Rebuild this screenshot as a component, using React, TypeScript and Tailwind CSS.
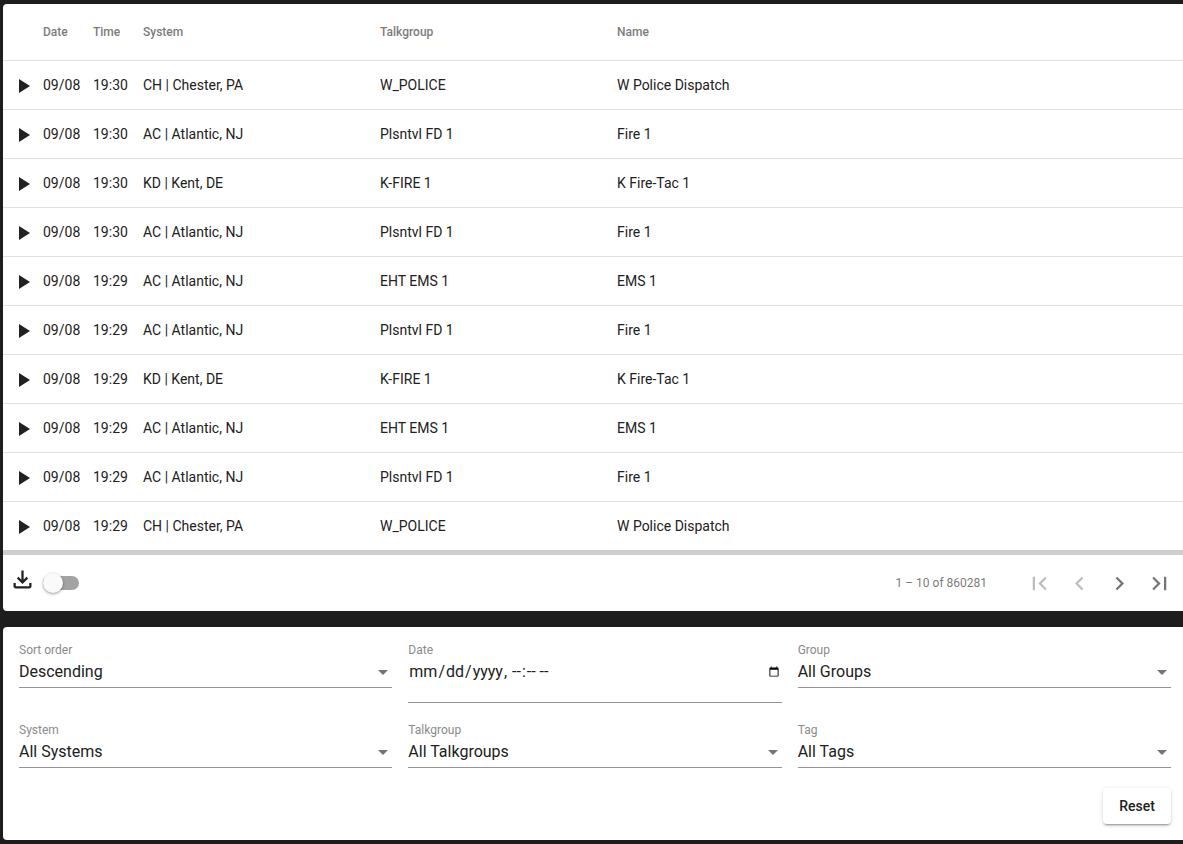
import React from "react";

const rows = [
  ["09/08", "19:30", "CH | Chester, PA", "W_POLICE", "W Police Dispatch"],
  ["09/08", "19:30", "AC | Atlantic, NJ", "Plsntvl FD 1", "Fire 1"],
  ["09/08", "19:30", "KD | Kent, DE", "K-FIRE 1", "K Fire-Tac 1"],
  ["09/08", "19:30", "AC | Atlantic, NJ", "Plsntvl FD 1", "Fire 1"],
  ["09/08", "19:29", "AC | Atlantic, NJ", "EHT EMS 1", "EMS 1"],
  ["09/08", "19:29", "AC | Atlantic, NJ", "Plsntvl FD 1", "Fire 1"],
  ["09/08", "19:29", "KD | Kent, DE", "K-FIRE 1", "K Fire-Tac 1"],
  ["09/08", "19:29", "AC | Atlantic, NJ", "EHT EMS 1", "EMS 1"],
  ["09/08", "19:29", "AC | Atlantic, NJ", "Plsntvl FD 1", "Fire 1"],
  ["09/08", "19:29", "CH | Chester, PA", "W_POLICE", "W Police Dispatch"],
];

const gridCols = "grid grid-cols-[40px_50px_50px_237px_237px_1fr] items-center";

function MatIcon({ d, className }: { d: string; className: string }) {
  return (
    <svg viewBox="0 0 24 24" className={className} fill="currentColor">
      <path d={d} />
    </svg>
  );
}

function PageButton({ d, disabled }: { d: string; disabled?: boolean }) {
  return (
    <button className={`w-10 h-10 flex items-center justify-center ${disabled ? "text-[#bdbdbd]" : "text-[#757575]"}`}>
      <MatIcon d={d} className="w-[27px] h-[27px]" />
    </button>
  );
}

function SelectField({ label, value }: { label: string; value: string }) {
  return (
    <div className="flex flex-col">
      <span className="text-xs leading-[14px] text-[#8a8a8a]">{label}</span>
      <div className="flex items-center justify-between h-[27px] pt-[1px] pr-[4px] border-b border-[#949494] box-content pb-[2px]">
        <span className="text-base leading-[20px] text-[#212121]">{value}</span>
        <span className="w-0 h-0 mt-[2px] border-x-[5px] border-x-transparent border-t-[5px] border-t-[#757575]" />
      </div>
    </div>
  );
}

export default function App() {
  return (
    <div className="h-[844px] overflow-hidden bg-[#1d1d1d] pt-[4px] pl-[3px] font-['Roboto',sans-serif]">
      <div className="bg-white rounded-l-[4px] h-[607px] flex flex-col">
        <div className={`${gridCols} h-[57px] border-b border-[#e0e0e0] text-xs font-medium text-[#7c7c7c]`}>
          <span />
          <span>Date</span>
          <span>Time</span>
          <span>System</span>
          <span>Talkgroup</span>
          <span>Name</span>
        </div>
        {rows.map((r, i) => (
          <div
            key={i}
            className={`${gridCols} text-sm text-[#212121] ${i < 9 ? "h-[49px] border-b border-[#e0e0e0]" : "h-[48px]"}`}
          >
            <span className="pl-[8px] flex mt-[2px]">
              <MatIcon d="M8 5v14l11-7z" className="w-6 h-6 text-[#212121]" />
            </span>
            {r.map((c, j) => (
              <span key={j}>{c}</span>
            ))}
          </div>
        ))}
        <div className="h-[5px] bg-[#cfcfcf]" />
        <div className="flex-1 flex items-center pl-[6px]">
          <MatIcon
            d="M18 15v3H6v-3H4v3c0 1.1.9 2 2 2h12c1.1 0 2-.9 2-2v-3h-2zm-1-4l-1.41-1.41L13 12.17V4h-2v8.17L8.41 9.59 7 11l5 5 5-5z"
            className="w-[27px] h-[27px] text-[#212121] -mt-[8px]"
          />
          <div className="relative w-9 h-[14px] ml-[7px] rounded-full bg-[#a3a3a3]">
            <span className="absolute -top-[3px] left-0 w-5 h-5 rounded-full bg-[#fafafa] shadow-[0_1px_3px_rgba(0,0,0,0.4)]" />
          </div>
          <span className="ml-auto text-xs text-[#7c7c7c]">1 – 10 of 860281</span>
          <div className="flex ml-[32px] mr-[4px]">
            <PageButton disabled d="M18.41 16.59L13.82 12l4.59-4.59L17 6l-6 6 6 6zM6 6h2v12H6z" />
            <PageButton disabled d="M15.41 7.41L14 6l-6 6 6 6 1.41-1.41L10.83 12z" />
            <PageButton d="M10 6L8.59 7.41 13.17 12l-4.58 4.59L10 18l6-6z" />
            <PageButton d="M5.59 7.41L10.18 12l-4.59 4.59L7 18l6-6-6-6zM16 6h2v12h-2z" />
          </div>
        </div>
      </div>

      <div className="mt-[16px] bg-white rounded-l-[4px] h-[213px] pt-[16px] pl-[16px] pr-[12px]">
        <div className="grid grid-cols-3 gap-x-[16px]">
          <SelectField label="Sort order" value="Descending" />
          <div className="flex flex-col">
            <span className="text-xs leading-[14px] text-[#8a8a8a]">Date</span>
            <input
              type="datetime-local"
              className="h-[46px] pb-[18px] pt-[2px] text-base text-[#212121] border-b border-[#949494] outline-none w-full [&::-webkit-calendar-picker-indicator]:w-[12px] [&::-webkit-calendar-picker-indicator]:h-[12px] [&::-webkit-calendar-picker-indicator]:m-0 [&::-webkit-calendar-picker-indicator]:mr-[2px] [&::-webkit-calendar-picker-indicator]:p-0"
            />
          </div>
          <SelectField label="Group" value="All Groups" />
        </div>
        <div className="grid grid-cols-3 gap-x-[16px] mt-[20px]">
          <SelectField label="System" value="All Systems" />
          <SelectField label="Talkgroup" value="All Talkgroups" />
          <SelectField label="Tag" value="All Tags" />
        </div>
        <div className="flex justify-end mt-[20px]">
          <button className="w-[68px] h-9 rounded-[4px] bg-white text-sm font-medium text-[#212121] shadow-[0_3px_1px_-2px_rgba(0,0,0,0.2),0_2px_2px_0_rgba(0,0,0,0.14),0_1px_5px_0_rgba(0,0,0,0.12)]">
            Reset
          </button>
        </div>
      </div>
    </div>
  );
}
